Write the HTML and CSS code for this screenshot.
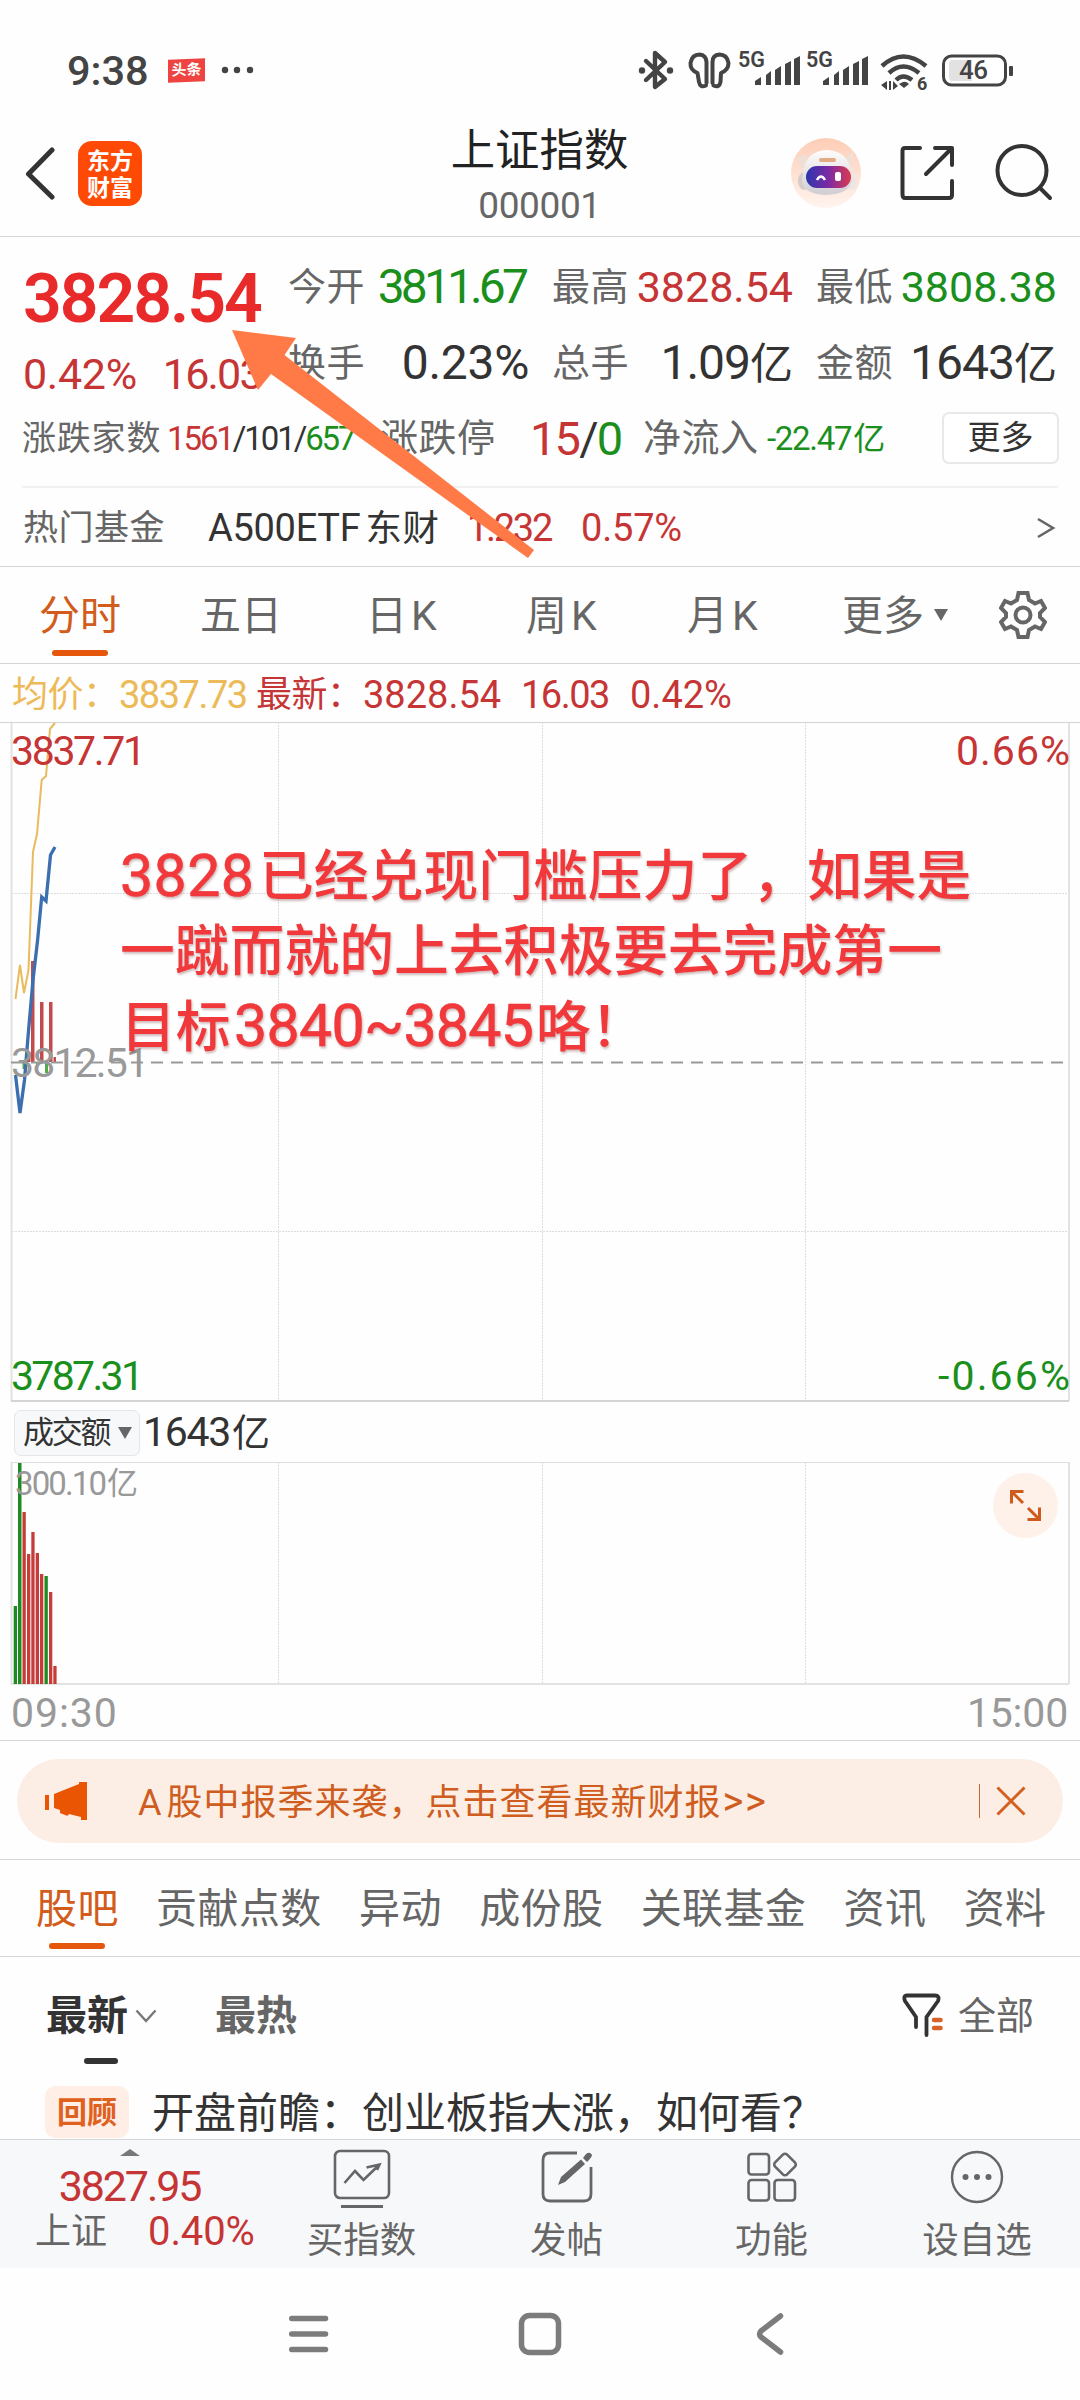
FILE: index.html
```html
<!DOCTYPE html>
<html lang="zh-CN">
<head>
<meta charset="utf-8">
<title>上证指数 000001</title>
<link rel="stylesheet" href="styles.css">
</head>
<body>
<div class="screen">
  <div class="status">
    <span class="clock">9:38</span>
    <span class="news-chip">头条</span>
    <svg class="more-dots" width="34" height="8" viewBox="0 0 34 8"><circle cx="4" cy="4" r="3.2"/><circle cx="16" cy="4" r="3.2"/><circle cx="29" cy="4" r="3.2"/></svg>
    <svg class="status-icons" width="380" height="54" viewBox="636 48 380 54">
      <g fill="none" stroke="#444" stroke-width="4.4" stroke-linejoin="round" stroke-linecap="round">
        <path d="M646 61L665 79L655 87V53L665 62L646 80"/>
        <path d="M706 85.500Q700 88 699 82L697.500 73Q690 70 690.500 63Q692 54.500 699.500 54.500Q706 55 706.500 62V83M713.500 85.500Q719.500 88 720.500 82L721 73Q728.500 70 728.500 63Q727 54.500 719.500 54.500Q712.500 55 712.500 62V83" stroke-width="4"/>
      </g>
      <g fill="#444"><circle cx="642" cy="70.500" r="3.200"/><circle cx="670" cy="70.500" r="3.200"/>
        <path id="bars" d="M755 85V81L761 77V85ZM766 85V75L771 71V85ZM775 85V70L781 66V85ZM785 85V64L791 61V85ZM794 85V59L800 56V85Z"/>
        <use href="#bars" x="68"/></g>
      <g class="net"><text x="738" y="67">5G</text><text x="806" y="67">5G</text></g>
      <g fill="none" stroke="#444" stroke-width="4.500"><path d="M882 66Q903 47 926 66M889 73Q903 60 919 73M896 80Q903 73 912 80"/></g>
      <path d="M903 82Q906 81 909 84L904 88L899 84ZM887 81V90L881 85ZM889 81H891V90H889ZM893 90V81L898 86Z" fill="#444"/>
      <text x="917" y="90" class="wifi-n">6</text>
      <rect x="943.500" y="56" width="62" height="29" rx="8" fill="#fff" stroke="#444" stroke-width="3"/>
      <path d="M952 60H972V81H952Q949 81 949 77V64Q949 60 952 60Z" fill="#e2e2e2"/>
      <rect x="1009" y="66" width="4" height="10" rx="1" fill="#444"/>
      <text x="959" y="79" class="batt">46</text>
    </svg>
  </div>

  <div class="header">
    <svg class="back" width="30" height="54" viewBox="0 0 30 54"><path d="M27 3L3.500 27L27 50" /></svg>
    <div class="logo"><span>东方</span><span>财富</span></div>
    <div class="title"><h1>上证指数</h1><span>000001</span></div>
    <svg class="head-icons" width="264" height="72" viewBox="790 137 264 72">
      <defs>
        <linearGradient id="halo" x2="0" y2="1"><stop stop-color="#fdcdb6"/><stop offset="1" stop-color="#fff4ee"/></linearGradient>
        <linearGradient id="visor"><stop stop-color="#2d35ac"/><stop offset=".5" stop-color="#7c2aa4"/><stop offset="1" stop-color="#dc3a50"/></linearGradient>
        <linearGradient id="shell" x2="0" y2="1"><stop stop-color="#fffdfb"/><stop offset="1" stop-color="#cfcdd2"/></linearGradient>
      </defs>
      <circle cx="826" cy="173" r="35" fill="url(#halo)"/>
      <path d="M797 158L805 154L812 164L802 170ZM853 151L846 157L844 164L853 166Z" fill="#f1ded5"/>
      <ellipse cx="804" cy="181" rx="6" ry="9" fill="#d5cdca"/><ellipse cx="851" cy="181" rx="6" ry="9" fill="#eee6e5"/>
      <path d="M803 172Q806 151 827 150Q847 151 851 170L852 180Q850 194 826 195Q803 194 802 181Z" fill="url(#shell)"/>
      <rect x="819" y="158" width="17" height="4" rx="2" fill="#e2ab83"/>
      <rect x="806" y="166" width="45" height="22" rx="11" fill="url(#visor)"/>
      <path d="M817 180Q821 173 825 180" fill="none" stroke="#fff" stroke-width="2.500"/><rect x="835" y="172" width="6" height="9" rx="2" fill="#fff"/>
      <g fill="none" stroke="#333" stroke-width="4" stroke-linecap="round" stroke-linejoin="round">
        <path d="M920 148H905Q902.500 148 902.500 151V194Q902.500 198 905 198H949Q952 198 952 195V181M935 148H952V165M951 149L926 174"/>
        <circle cx="1022" cy="170.500" r="24.500"/><path d="M1040 188L1050 198"/>
      </g>
    </svg>
  </div>

  <section class="quote">
    <div class="main">
      <strong>3828.54</strong>
      <div class="change red"><span>0.42%</span><span>16.03</span></div>
    </div>
    <div class="stats">
      <div><label>今开</label><b class="green open">3811.67</b></div>
      <div><label>最高</label><b class="red">3828.54</b></div>
      <div><label>最低</label><b class="green">3808.38</b></div>
      <div><label>换手</label><b class="big">0.23%</b></div>
      <div><label>总手</label><b class="big yi">1.09<i>亿</i></b></div>
      <div><label>金额</label><b class="big yi">1643<i>亿</i></b></div>
    </div>
    <div class="breadth">
      <label class="small">涨跌家数</label>
      <b class="counts"><span class="red">1561</span>/101/<span class="green">657</span></b>
      <label>涨跌停</label>
      <b class="limit"><span class="red">15</span>/<span class="green">0</span></b>
      <label>净流入</label>
      <b class="flow green">-22.47<i>亿</i></b>
      <button>更多</button>
    </div>
    <div class="fund">
      <label>热门基金</label><span class="name">A500ETF<i>东财</i></span><span class="red price">1.232</span><span class="red pct">0.57%</span>
      <svg width="20" height="22" viewBox="0 0 20 22"><path d="M2 2L17 11L2 20" fill="none" stroke="#666" stroke-width="2.600"/></svg>
    </div>
    <svg class="pointer" width="304" height="230" viewBox="231 329 304 230"><path d="M232 330L296 338L284.500 355L534 550L528 558L271 374L258 390Z"/></svg>
  </section>

  <nav class="periods">
    <a class="on">分时</a><a>五日</a><a>日<i>K</i></a><a>周<i>K</i></a><a>月<i>K</i></a><a>更多</a>
    <svg class="caret" width="14" height="12" viewBox="0 0 14 12"><path d="M0 0H14L7 12Z" fill="#666"/></svg>
    <svg class="gear" width="48" height="50" viewBox="0 0 48 50"><g fill="none" stroke="#666" stroke-width="4"><path d="M19.500 3H28.500L30 10L36 13.500L42 11L46 18L41 23V27L46 32L42 39L36 36.500L30 40L28.500 47H19.500L18 40L12 36.500L6 39L2 32L7 27V23L2 18L6 11L12 13.500L18 10Z"/><circle cx="24" cy="25" r="7.500"/></g></svg>
  </nav>

  <div class="legend">
    <span class="avg">均价：</span><b class="avg">3837.73</b><span class="red">最新：</span><b class="red">3828.54</b><b class="red n2">16.03</b><b class="red">0.42%</b>
  </div>

  <svg class="chart" width="1080" height="681" viewBox="0 722 1080 681">
    <path class="dots" d="M278.500 722V1400M542.500 722V1400M805.500 722V1400M12 893.500H1068M12 1231.500H1068"/>
    <path class="frame" d="M11.500 722V1401M1069 722V1401"/>
    <path class="rule" d="M0 722.500H1080"/><path d="M11 1401H1069" stroke="#d4d4d4" stroke-width="2"/>
    <g fill="#c34a4d"><rect x="31" y="961" width="3.500" height="101"/><rect x="40" y="1002" width="3.500" height="60"/><rect x="49" y="1002" width="3.500" height="60"/><rect x="53.500" y="1057" width="2.500" height="5"/><rect x="27" y="1052" width="3.500" height="10"/></g>
    <g fill="#4fae46"><rect x="22.500" y="1062" width="3" height="7"/><rect x="36" y="1062" width="3" height="4"/><rect x="45" y="1062" width="3" height="11"/></g>
    <polyline points="15.500,999 20,965 24,993 28.500,970 33,852 37,834 41.700,780 46,776 50,729 55,723" fill="none" stroke="#e9bb5e" stroke-width="2"/>
    <polyline points="15.500,1075 20,1113 24.500,1080 28.500,1031 33,980 37.500,941 41.700,897 46,901 50.500,855 55,847" fill="none" stroke="#3b6fb0" stroke-width="3.300"/>
    <path d="M11 1062.500H1068" stroke="#999" stroke-width="2" stroke-dasharray="12 8"/>
    <g class="axis">
      <text x="11" y="765" textLength="135" class="f-red">3837.71</text>
      <text x="956" y="765" textLength="114" class="f-red">0.66%</text>
      <text x="11" y="1077" textLength="138" class="f-gray">3812.51</text>
      <text x="11" y="1390" textLength="133" class="f-green">3787.31</text>
      <text x="938" y="1390" textLength="132" class="f-green">-0.66%</text>
    </g>
    <g class="note">
      <text x="120" y="896"><tspan class="d" textLength="134">3828</tspan><tspan x="259" y="895">已经兑现门槛压力了，如果是</tspan></text>
      <text x="120" y="970">一蹴而就的上去积极要去完成第一</text>
      <text x="121" y="1046">目标<tspan x="234" class="d" textLength="300">3840~3845</tspan><tspan x="536">咯！</tspan></text>
    </g>
  </svg>

  <div class="vol-head"><span class="picker">成交额<svg width="14" height="12" viewBox="0 0 14 12"><path d="M0 0H14L7 12Z" fill="#666"/></svg></span><b>1643<i>亿</i></b></div>

  <svg class="volume" width="1080" height="224" viewBox="0 1462 1080 224">
    <path class="dots" d="M278.500 1462V1683M542.500 1462V1683M805.500 1462V1683"/>
    <path class="frame" d="M11.500 1462V1684M1069 1462V1684M11 1684H1069"/><path d="M11 1462.500H1069" stroke="#dedede"/>
    <g fill="#c63c39"><rect x="22.500" y="1512" width="3.300" height="172"/><rect x="27" y="1554" width="3.300" height="130"/><rect x="31.300" y="1532" width="3.300" height="152"/><rect x="35.700" y="1553" width="3.300" height="131"/><rect x="40" y="1574" width="3.300" height="110"/><rect x="49" y="1592" width="3.300" height="92"/><rect x="53.300" y="1666" width="3.300" height="18"/></g>
    <g fill="#1f8a22"><rect x="13.700" y="1606" width="3.300" height="78"/><rect x="18" y="1463" width="3.500" height="221"/><rect x="44.500" y="1576" width="3.300" height="108"/></g>
    <text x="15" y="1495" class="vol-max"><tspan textLength="92">300.10</tspan><tspan x="107" y="1494">亿</tspan></text>
    <circle cx="1025.500" cy="1505.500" r="32.500" fill="#fef1e9"/>
    <path d="M1023.500 1491.500H1011.500V1503.500M1012 1492L1023 1503M1028 1508L1039 1519M1027.500 1519.500H1039.500V1507.500" fill="none" stroke="#cf5a1d" stroke-width="3"/>
  </svg>

  <div class="hours"><span>09:30</span><span class="end">15:00</span></div>

  <div class="promo">
    <div class="pill">
      <svg width="44" height="40" viewBox="0 0 44 40"><path d="M0 14H4V29H0ZM9 13L34 3V1H42V39H36V36L24 33Q23 36 20 34L15 32V29L9 27Z" fill="#ea5504"/></svg>
      <span class="msg"><i>A</i>股中报季来袭，点击查看最新财报<i class="more">&gt;&gt;</i></span>
      <span class="bar"></span>
      <svg class="close" width="32" height="32" viewBox="0 0 32 32"><path d="M2.500 2.500L29.500 29.500M29.500 2.500L2.500 29.500" stroke="#d4601f" stroke-width="3"/></svg>
    </div>
  </div>

  <nav class="sections">
    <a class="on">股吧</a><a>贡献点数</a><a>异动</a><a>成份股</a><a>关联基金</a><a>资讯</a><a>资料</a>
  </nav>

  <div class="sort">
    <span class="cur">最新</span>
    <svg width="22" height="14" viewBox="0 0 22 14"><path d="M1.500 1.500L11 12L20.500 1.500" fill="none" stroke="#777" stroke-width="2.400"/></svg>
    <span class="hot">最热</span>
    <svg class="funnel" width="42" height="46" viewBox="0 0 42 46"><path d="M14 34V24L3 8Q1 2.500 5 2.500H33Q38 2.500 36 8L24.500 24V42" fill="none" stroke="#333" stroke-width="3.800" stroke-linecap="round" stroke-linejoin="round"/><path d="M32 27H38.500M32 35H38.500" stroke="#d8622a" stroke-width="4.500" stroke-linecap="round"/></svg>
    <span class="all">全部</span>
  </div>
  <div class="post"><span class="tag">回顾</span><span class="post-title">开盘前瞻：创业板指大涨，如何看？</span></div>

  <div class="dock">
    <div class="index">
      <svg width="20" height="7" viewBox="0 0 20 7"><path d="M0 7L10 0L20 7Z" fill="#77787c"/></svg>
      <b class="red">3827.95</b>
      <div><span>上证</span><b class="red">0.40%</b></div>
    </div>
    <div class="act"><svg width="58" height="60" viewBox="0 0 58 60"><g fill="none" stroke="#666" stroke-width="2.600"><rect x="2" y="2" width="54" height="47" rx="5"/><path d="M8 57.500H50" stroke-width="3"/><path d="M11.500 34L22 22L30.500 31L46 16M33.500 18.500L46.500 15.500L44 21"/></g></svg><span>买指数</span></div>
    <div class="act"><svg width="58" height="60" viewBox="0 0 58 60"><path d="M39 4H12Q5 4 5 11V45Q5 52 12 52H46Q53 52 53 45V18" fill="none" stroke="#666" stroke-width="2.800"/><path d="M20 36L23 28L43 10.500L47 15L27 33ZM45 9L48 5Q52 2 54 6Q54 8 49 13Z" fill="#666"/></svg><span>发帖</span></div>
    <div class="act"><svg width="58" height="60" viewBox="0 0 58 60"><g fill="none" stroke="#666" stroke-width="2.600"><rect x="5.500" y="5" width="20.500" height="20.500" rx="3"/><rect x="5.500" y="31" width="20.500" height="20.500" rx="3"/><rect x="31.500" y="31" width="20.500" height="20.500" rx="3"/><rect x="33.500" y="7" width="17" height="17" rx="3" transform="rotate(45 42 15.500)"/></g></svg><span>功能</span></div>
    <div class="act"><svg width="58" height="60" viewBox="0 0 58 60"><circle cx="29" cy="28" r="25" fill="none" stroke="#666" stroke-width="2.400"/><g fill="#666"><circle cx="17.500" cy="28" r="3"/><circle cx="29" cy="28" r="3"/><circle cx="40.500" cy="28" r="3"/></g></svg><span>设自选</span></div>
  </div>

  <div class="sysnav">
    <svg width="40" height="42" viewBox="0 0 40 42"><path d="M2.700 5.500H36.500M2.700 21H36.500M2.700 36.500H36.500"/></svg>
    <svg width="44" height="44" viewBox="0 0 44 44"><rect x="3.500" y="3.500" width="37" height="37" rx="8"/></svg>
    <svg width="30" height="44" viewBox="0 0 30 44"><path d="M25.500 4L6 19Q3 22 6 25L25.500 40"/></svg>
  </div>
</div>
</body>
</html>
```
FILE: styles.css
```css
* { box-sizing: border-box; }
body { margin: 0; background: #fff; }
.screen {
  width: 1080px; height: 2400px; overflow: hidden;
  display: flex; flex-direction: column;
  font-family: Roboto, "Noto Sans CJK SC", sans-serif;
  line-height: 1; color: #333; white-space: nowrap; background: #fefefe;
}
.screen > * { flex: none; }
b { font-weight: 400; }
i { font-style: normal; }
svg { display: block; flex: none; }
.red { color: #c63535; }
.green { color: #1a8f1c; }

.status { height: 110px; padding: 48px 0 0 67px; display: flex; align-items: flex-start; }
.clock { font-size: 41.500px; font-weight: 500; color: #444; width: 101px; padding-top: 2px; }
.news-chip {
  width: 37px; height: 23px; margin-top: 11px; background: #ee4340; color: #fff;
  font-size: 15px; font-weight: 700; text-align: center; line-height: 23px; transform: skewY(-2deg);
}
.more-dots { margin: 18px 0 0 16px; fill: #444; }
.status-icons { margin-left: 381px; }
.net text { font: 600 21.500px Roboto, sans-serif; fill: #444; }
.wifi-n { font: 700 18px Roboto, sans-serif; fill: #444; }
.batt { font: 500 26px Roboto, sans-serif; letter-spacing: -.5px; fill: #444; }

.header { height: 127px; border-bottom: 1px solid #d4d4d4; display: flex; padding-left: 25px; }
.back { margin-top: 37px; fill: none; stroke: #333; stroke-width: 5; stroke-linecap: round; stroke-linejoin: round; }
.logo {
  margin: 31px 0 0 23px; width: 64px; height: 65px; border-radius: 14px; background: #ff4a05; color: #fff;
  display: flex; flex-direction: column; align-items: center; justify-content: center; gap: 4px;
  font-size: 23px; font-weight: 700; padding-top: 2px;
}
.title { width: 648px; margin: 19px 0 0; display: flex; flex-direction: column; align-items: center; padding-left: 147px; }
.title h1 { margin: 0; font-size: 44.400px; font-weight: 400; line-height: 44px; color: #222; }
.title span { font-size: 37px; color: #666; letter-spacing: -.4px; margin-top: 14px; }
.head-icons { margin: 27px 0 0; }

.quote { height: 330px; border-bottom: 1px solid #d4d4d4; position: relative; display: grid; grid-template: 157px 94px 1fr / 289px 768px; }
.main { padding: 28px 0 0 23px; }
.main strong { display: block; font-size: 68px; font-weight: 600; color: #e92a2a; letter-spacing: -2.100px; }
.change { display: flex; gap: 26px; font-size: 43px; letter-spacing: -.3px; margin-top: 20px; }
.change span + span { letter-spacing: -1.800px; }
.stats { display: grid; grid-template-columns: repeat(3, 240px); column-gap: 24px; grid-template-rows: 48px 48px; row-gap: 28px; padding-top: 26px; }
.stats div { display: flex; justify-content: space-between; align-items: center; }
label { font-size: 38px; letter-spacing: .5px; color: #666; }
.stats label { margin-left: -1px; }
.stats b { font-size: 43px; }
.stats .open { font-size: 48px; letter-spacing: -3.900px; margin-right: 4px; }
.stats .big { font-size: 48px; letter-spacing: -.3px; }
.stats .yi { letter-spacing: -1px; }
.yi i { font-size: 43px; letter-spacing: 0; }
.breadth {
  grid-column: 1 / 3; margin: 0 0 0 22px; width: 1036px; display: grid; align-items: center;
  grid-template-columns: 145px 213px 150px 113px 123px 176px 116px;
  border-bottom: 2px solid #f1f1f1; padding: 0 0 4px;
}
label.small { font-size: 34px; letter-spacing: .8px; }
.counts { font-size: 33px; letter-spacing: -2.100px; }
.limit { font-size: 47px; letter-spacing: -1.800px; }
.flow { font-size: 33px; letter-spacing: -1.300px; padding-left: 1px; }
.flow i { font-size: 32px; margin-left: 2px; }
.breadth button { width: 117px; height: 52px; padding: 0; border: 2px solid #e8e8e8; border-radius: 7px; background: #fff; color: #333; font: 33px/46px Roboto, "Noto Sans CJK SC", sans-serif; }
.fund { grid-column: 1 / 3; display: grid; grid-template-columns: 185px 259px 114px 455px 20px; padding: 2px 0 0 23px; align-items: center; font-size: 38px; }
.fund label { font-size: 35px; }
.name { letter-spacing: -.3px; }
.name i { font-size: 36.500px; margin-left: 5px; letter-spacing: .5px; }
.price { letter-spacing: -2.300px; }
.pct { letter-spacing: -.2px; }
.pointer { position: absolute; left: 231px; top: 92px; fill: #ff7a47; }

.periods {
  height: 97px; border-bottom: 1px solid #d4d4d4; display: grid; align-items: center; font-size: 41px; color: #666;
  grid-template-columns: 161px 166px 160px 161px 155px 92px 65px 48px; padding-left: 39px;
}
.periods a { height: 96px; line-height: 99px; position: relative; }
.periods i { margin-left: 4px; }
.on { color: #d15c1c; }
.periods .on::after, .sections .on::after { content: ""; position: absolute; left: 13px; bottom: 7px; width: 56px; height: 6px; border-radius: 3px; background: #e4570c; }

.legend { height: 58px; display: grid; grid-template-columns: 107px 137px 107px 158px 109px auto; justify-content: start; align-items: center; padding: 3px 0 0 12px; font-size: 38px; }
.legend span { font-size: 36px; letter-spacing: -.5px; }
.legend b { letter-spacing: 0; }
.legend b.avg { letter-spacing: -1.500px; }
.legend .n2 { letter-spacing: -1.500px; }
.avg { color: #ecba58; }

.dots { fill: none; stroke: #ddd; stroke-width: 1; stroke-dasharray: 2 1; }
.frame { fill: none; stroke: #e2e2e2; stroke-width: 2; }
.rule { stroke: #d4d4d4; }
.axis text { font: 41px Roboto, sans-serif; }
.f-red { fill: #c63535; }
.f-green { fill: #1a8f1c; }
.f-gray { fill: #999; }
.note text { font: 500 54.800px Roboto, "Noto Sans CJK SC", sans-serif; fill: #f1383b; filter: drop-shadow(1px 2px 1px rgba(120, 60, 60, .35)); }
.note .d { font-size: 59px; font-weight: 400; stroke: #f1383b; stroke-width: .6px; }

.vol-head { height: 59px; display: flex; align-items: center; padding-left: 14px; gap: 3px; }
.picker { width: 126px; height: 46px; border: 1px solid #e3e6ea; border-radius: 7px; background: #f7f8fa; display: flex; align-items: center; gap: 9px; padding-left: 8px; font-size: 31px; letter-spacing: -2.300px; color: #333; }
.vol-head b { font-size: 41px; letter-spacing: -1.300px; }
.vol-head i { font-size: 38px; margin-left: 2px; }
.vol-max { font: 33px Roboto, "Noto Sans CJK SC", sans-serif; fill: #999; }
.vol-max tspan + tspan { font-size: 31px; }

.hours { height: 55px; border-bottom: 1px solid #d4d4d4; display: flex; justify-content: space-between; padding: 7px 12px 0 11px; font-size: 41px; letter-spacing: .9px; color: #999; }
.hours .end { letter-spacing: -.2px; }
.promo { height: 119px; border-bottom: 1px solid #d4d4d4; padding: 18px 17px; }
.pill { height: 84px; border-radius: 42px; background: #fceee5; display: grid; grid-template-columns: 93px 841px 16px 32px; align-items: center; padding-left: 28px; }
.msg { font-size: 36px; letter-spacing: 1px; color: #cf5d20; padding-top: 1px; }
.msg i { margin-right: 4px; }
.msg .more { font-size: 40px; margin: 0 0 0 1px; letter-spacing: 1.500px; }
.bar { width: 1px; height: 34px; background: #c06a35; }

.sections { height: 97px; border-bottom: 1px solid #d4d4d4; display: flex; gap: 37.300px; padding-left: 36px; font-size: 41px; letter-spacing: .4px; color: #666; }
.sections a { line-height: 99px; position: relative; }

.sort { height: 124px; display: grid; align-items: center; grid-template-columns: 89px 80px 687px 56px auto; justify-content: start; padding: 0 0 6px 46px; }
.cur, .hot { font-size: 41px; font-weight: 700; position: relative; }
.hot { color: #666; }
.cur::after { content: ""; position: absolute; left: 38px; top: 62px; width: 34px; height: 6px; border-radius: 3px; background: #333; }
.all { font-size: 38px; color: #666; }
.post { height: 58px; display: flex; padding-left: 45px; align-items: center; }
.tag { width: 84px; height: 52px; margin-top: 4px; border-radius: 11px; background: #feeee6; color: #e0601d; font-size: 30px; font-weight: 700; line-height: 54px; text-align: center; }
.post-title { font-size: 42px; margin: 8px 0 0 23px; color: #333; }

.dock { height: 129px; border-top: 1px solid #d4d6d9; background: #f7f8fa; display: grid; grid-template-columns: 259px 205px 205px 205px 206px; }
.index { display: flex; flex-direction: column; align-items: center; padding-top: 9px; }
.index > b { font-size: 43px; letter-spacing: -2.100px; margin-top: 9px; }
.index div { display: flex; gap: 41px; align-items: center; width: 224px; font-size: 36px; color: #666; margin-top: 4px; align-self: flex-start; margin-left: 35px; }
.index div b { font-size: 40px; letter-spacing: -.1px; }
.act { display: flex; flex-direction: column; align-items: center; padding-top: 9px; font-size: 36.500px; color: #666; }
.act span { margin-top: 14px; }
.sysnav { height: 131px; display: flex; align-items: center; padding-left: 289px; gap: 189px; fill: none; stroke: #7c7c7c; stroke-width: 5.500; stroke-linecap: round; stroke-linejoin: round; }
.sysnav svg:last-child { margin-left: 4px; }
```
